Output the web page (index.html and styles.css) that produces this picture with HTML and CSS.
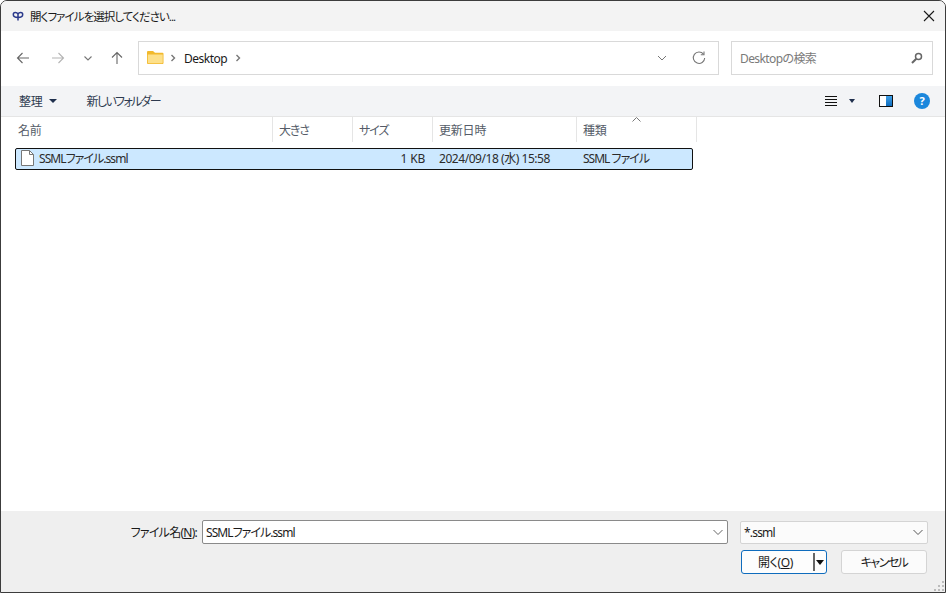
FILE: index.html
```html
<!DOCTYPE html>
<html lang="ja">
  <head>
    <meta charset="UTF-8" />
    <title>開くファイルを選択してください...</title>
    <link rel="stylesheet" href="styles.css">
  </head>
  <body>
    <div class="dialog">
      <div class="titleBar">
        <svg class="appIcon" width="12" height="12" viewBox="0 0 12 12">
          <path d="M6 4.200C5 2 1.300 2 1.300 4.500C1.300 7 4 7.500 6 7.500C8 7.500 10.700 7 10.700 4.500C10.700 2 7 2 6 4.200V10.500" stroke="#2b3a8c" stroke-width="1.500" fill="none"/>
        </svg>
        <span class="titleText">開くファイルを選択してください...</span>
        <svg class="closeIcon" width="12" height="12" viewBox="0 0 12 12">
          <path d="M1 1L11 11M11 1L1 11" stroke="#1a1a1a" stroke-width="1.1" fill="none"/>
        </svg>
      </div>

      <div class="navBar">
        <div class="navButtons">
          <svg width="14" height="14" viewBox="0 0 14 14"><path d="M13 7H1.5M6.5 2L1.5 7L6.5 12" stroke="#666" stroke-width="1.1" fill="none"/></svg>
          <svg class="navForward" width="14" height="14" viewBox="0 0 14 14"><path d="M1 7H12.5M7.5 2L12.5 7L7.5 12" stroke="#b4b4b4" stroke-width="1.1" fill="none"/></svg>
          <svg class="navDown" width="10" height="10" viewBox="0 0 10 10"><path d="M1.5 3.5L5 7L8.500 3.500" stroke="#777" stroke-width="1.1" fill="none"/></svg>
          <svg class="navUp" width="14" height="14" viewBox="0 0 14 14"><path d="M7 13V1.500M2 6.500L7 1.500L12 6.500" stroke="#666" stroke-width="1.1" fill="none"/></svg>
        </div>
        <div class="addressBox">
          <svg class="folderIcon" width="17" height="14" viewBox="0 0 17 14">
            <path d="M0 2Q0 1 1 1H6L8 2.800H15.500Q16.500 2.800 16.500 3.800V13Q16.500 14 15.500 14H1Q0 14 0 13Z" fill="#f2b92c"/>
            <path d="M0.800 4.500H15.700V12.500Q15.700 13.200 15 13.200H1.500Q0.800 13.200 0.800 12.500Z" fill="#fde08a"/>
          </svg>
          <svg class="crumbArrow" width="6" height="8" viewBox="0 0 6 8"><path d="M1.500 1L4.500 4L1.500 7" stroke="#777" stroke-width="1.400" fill="none"/></svg>
          <span class="crumbText">Desktop</span>
          <svg class="crumbArrow" width="6" height="8" viewBox="0 0 6 8"><path d="M1.500 1L4.500 4L1.500 7" stroke="#777" stroke-width="1.400" fill="none"/></svg>
          <svg class="addressDown" width="10" height="10" viewBox="0 0 10 10"><path d="M1 3L5 7L9 3" stroke="#777" stroke-width="1" fill="none"/></svg>
          <svg class="refreshIcon" width="14" height="14" viewBox="0 0 14 14">
            <path d="M11.500 3.200A5.700 5.700 0 1 0 12.700 7" stroke="#777" stroke-width="1.100" fill="none"/>
            <path d="M12 0.500V3.700H8.800" stroke="#777" stroke-width="1.100" fill="none"/>
          </svg>
        </div>
        <div class="searchBox">
          <span class="searchText">Desktopの検索</span>
          <svg width="12" height="12" viewBox="0 0 12 12">
            <circle cx="7.500" cy="4.500" r="3" stroke="#666" stroke-width="1.500" fill="none"/>
            <path d="M5.300 6.700L1 11" stroke="#666" stroke-width="2" fill="none"/>
          </svg>
        </div>
      </div>

      <div class="toolBar">
        <span class="toolItem organize">整理</span>
        <span class="caret"></span>
        <span class="toolItem newFolder">新しいフォルダー</span>
        <div class="toolRight">
          <svg class="viewIcon" width="12" height="10" viewBox="0 0 12 10">
            <path d="M0 0.500H12M0 3.500H12M0 6.500H12M0 9.500H12" stroke="#111" stroke-width="1" fill="none"/>
          </svg>
          <span class="caret"></span>
          <span class="paneIcon"><span class="paneFill"></span></span>
          <span class="helpIcon">?</span>
        </div>
      </div>

      <div class="listHeader">
        <span class="col colName">名前</span>
        <span class="col colSize kanaHead">大きさ</span>
        <span class="col colCap kanaHead">サイズ</span>
        <span class="col colDate">更新日時</span>
        <span class="col colType">種類<svg class="sortArrow" width="9" height="5" viewBox="0 0 9 5"><path d="M0.500 4.500L4.500 0.500L8.500 4.500" stroke="#777" stroke-width="1" fill="none"/></svg></span>
      </div>

      <div class="fileList">
        <div class="fileRow">
          <div class="cellName">
            <svg width="13" height="16" viewBox="0 0 13 16">
              <path d="M0.500 0.500H8.500L12.500 4.500V15.500H0.500Z" fill="#fff" stroke="#777" stroke-width="1"/>
              <path d="M8.500 0.500V4.500H12.500" fill="none" stroke="#777" stroke-width="1"/>
            </svg>
            <span class="fileName">SSMLファイル.ssml</span>
          </div>
          <div class="cellSize">1 KB</div>
          <div class="cellDate">2024/09/18 (水) 15:58</div>
          <div class="cellType">SSML ファイル</div>
        </div>
      </div>

      <div class="footer">
        <div class="footerRow">
          <label class="nameLabel" for="fileName">ファイル名(<u>N</u>):</label>
          <div class="nameBox">
            <input id="fileName" class="nameInput" type="text" value="SSMLファイル.ssml" />
            <svg width="10" height="10" viewBox="0 0 10 10"><path d="M0.500 3L5 7.500L9.500 3" stroke="#666" stroke-width="1" fill="none"/></svg>
          </div>
          <div class="filterBox">
            <span class="filterText">*.ssml</span>
            <svg width="10" height="10" viewBox="0 0 10 10"><path d="M0.500 3L5 7.500L9.500 3" stroke="#555" stroke-width="1" fill="none"/></svg>
          </div>
        </div>
        <div class="buttonRow">
          <div class="openButton">
            <span class="openLabel">開く(<u>O</u>)</span>
            <span class="openSplit"></span>
            <span class="caret blackCaret"></span>
          </div>
          <div class="cancelButton">キャンセル</div>
        </div>
        <svg class="grip" width="10" height="10" viewBox="0 0 10 10">
          <path d="M8 0h2v2H8zM4 4h2v2H4zM8 4h2v2H8zM0 8h2v2H0zM4 8h2v2H4zM8 8h2v2H8z" fill="#bbb"/>
        </svg>
      </div>
    </div>
  </body>
</html>
```

FILE: styles.css
```css
* {
  box-sizing: border-box;
}
html,
body {
  margin: 0;
  height: 593px;
  overflow: hidden;
}
body {
  font-family: "Noto Sans", "Noto Sans CJK JP", sans-serif;
  font-size: 12px;
  font-feature-settings: "palt";
  letter-spacing: -0.2px;
  color: #1a1a1a;
  background: #fff;
}
.dialog {
  position: relative;
  display: flex;
  flex-direction: column;
  width: 946px;
  height: 593px;
  border: 1px solid #3c3c3c;
  border-radius: 7px 7px 0 0;
  overflow: hidden;
  background: #fff;
}
.titleBar {
  display: flex;
  align-items: center;
  height: 30px;
  flex: none;
  padding: 0 10px 0 11px;
  background: #f3f3f3;
}
.titleText {
  margin: 0 0 1px 6px;
  font-size: 11.500px;
  letter-spacing: -0.950px;
}
.closeIcon {
  margin-left: auto;
}
.navBar {
  display: flex;
  align-items: flex-start;
  height: 55px;
  flex: none;
  padding: 10px 12px 0 15px;
  background: #fff;
}
.navButtons {
  display: flex;
  align-items: center;
  flex: none;
  width: 122px;
  height: 34px;
}
.navForward {
  margin-left: 21px;
}
.navDown {
  margin-left: 18px;
}
.navUp {
  margin-left: 17px;
}
.addressBox {
  display: flex;
  align-items: center;
  flex: none;
  width: 581px;
  height: 34px;
  padding: 0 12px 0 8px;
  border: 1px solid #d9d9d9;
}
.folderIcon {
  margin-bottom: 3px;
}
.crumbArrow {
  margin-left: 6px;
}
.crumbText {
  margin: 0 2px 0 8px;
  letter-spacing: -0.500px;
}
.addressDown {
  margin-left: auto;
}
.refreshIcon {
  margin-left: 25px;
}
.searchBox {
  display: flex;
  align-items: center;
  justify-content: space-between;
  flex: none;
  width: 202px;
  height: 34px;
  margin-left: 12px;
  padding: 0 9px 0 8px;
  border: 1px solid #d9d9d9;
  color: #7a7a7a;
}
.searchText {
  letter-spacing: -0.600px;
}
.toolBar {
  display: flex;
  align-items: center;
  height: 31px;
  flex: none;
  padding: 0 15px 1px 18px;
  background: #f3f4f6;
  border-bottom: 1px solid #e5e5e5;
  color: #2d3a4f;
}
.newFolder {
  margin-left: 30px;
  letter-spacing: -1.700px;
}
.caret {
  display: inline-block;
  width: 0;
  height: 0;
  margin-left: 6px;
  border-left: 4px solid transparent;
  border-right: 4px solid transparent;
  border-top: 4px solid #1f2f4d;
}
.toolRight {
  display: flex;
  align-items: center;
  margin-left: auto;
}
.toolRight .caret {
  margin-left: 12px;
  border-left-width: 3.500px;
  border-right-width: 3.500px;
}
.paneIcon {
  display: flex;
  justify-content: flex-end;
  width: 14px;
  height: 12px;
  margin-left: 24px;
  border: 1px solid #111;
  background: #fff;
}
.paneFill {
  width: 6px;
  background: linear-gradient(#3fa0e8, #0f6cbd);
}
.helpIcon {
  display: flex;
  align-items: center;
  justify-content: center;
  width: 16px;
  height: 16px;
  margin-left: 21px;
  border-radius: 50%;
  background: #1b87dc;
  color: #fff;
  font-size: 11px;
  font-weight: 700;
}
.listHeader {
  display: flex;
  height: 26px;
  flex: none;
  color: #555c68;
}
.col {
  position: relative;
  display: flex;
  align-items: center;
  height: 25px;
  padding-left: 6px;
  border-right: 1px solid #e5e5e5;
}
.kanaHead {
  letter-spacing: -1.100px;
}
.colName {
  width: 272px;
  padding-left: 17px;
}
.colSize,
.colCap {
  width: 80px;
}
.colDate {
  width: 144px;
}
.colType {
  width: 120px;
}
.sortArrow {
  position: absolute;
  left: 55px;
  top: 0;
}
.fileList {
  flex: 1;
  padding: 5px 0 0 14px;
}
.fileRow {
  display: flex;
  align-items: center;
  width: 678px;
  height: 22px;
  padding-bottom: 2px;
  border: 1px solid #111;
  border-radius: 2px;
  background: #cce8ff;
  color: #2b2b2b;
}
.cellName {
  display: flex;
  align-items: center;
  gap: 5px;
  width: 333px;
  padding-left: 5px;
}
.fileName {
  letter-spacing: -0.950px;
}
.cellSize {
  width: 76px;
  text-align: right;
}
.cellDate {
  width: 144px;
  margin-left: 14px;
  letter-spacing: -0.450px;
}
.cellType {
  letter-spacing: -1px;
}
.footer {
  position: relative;
  height: 81px;
  flex: none;
  padding: 9px 17px 0 0;
  background: #efefef;
}
.footerRow {
  display: flex;
  align-items: center;
}
.nameLabel {
  width: 201px;
  padding-right: 5px;
  text-align: right;
  letter-spacing: -0.750px;
}
.nameBox {
  display: flex;
  align-items: center;
  flex: none;
  width: 526px;
  height: 24px;
  padding-right: 4px;
  border: 1px solid #8a8a8a;
  border-radius: 2px;
  background: #fff;
}
.nameInput {
  flex: 1;
  min-width: 0;
  padding: 0 3px;
  border: none;
  outline: none;
  background: transparent;
  color: #1a1a1a;
  font: inherit;
  font-feature-settings: inherit;
  letter-spacing: -0.950px;
}
.filterBox {
  display: flex;
  align-items: center;
  justify-content: space-between;
  flex: none;
  width: 188px;
  height: 23px;
  margin-left: 12px;
  padding: 0 4px 0 3px;
  border: 1px solid #d4d4d4;
  border-radius: 2px;
  background: #fbfbfb;
}
.filterText {
  letter-spacing: -0.800px;
}
.buttonRow {
  display: flex;
  justify-content: flex-end;
  gap: 14px;
  margin-top: 6px;
  padding-right: 1px;
}
.openButton {
  display: flex;
  align-items: center;
  width: 86px;
  height: 24px;
  border: 1px solid #0f6cbd;
  border-radius: 3px;
  background: #fdfdfd;
}
.openLabel {
  width: 71px;
  padding-right: 4px;
  text-align: center;
  letter-spacing: -0.400px;
}
.openSplit {
  width: 2px;
  height: 18px;
  background: #666;
}
.blackCaret {
  margin-left: 1px;
  border-top: 5px solid #111;
}
.cancelButton {
  display: flex;
  align-items: center;
  justify-content: center;
  width: 86px;
  height: 24px;
  border: 1px solid #d4d4d4;
  border-radius: 3px;
  background: #fbfbfb;
  letter-spacing: -1.500px;
}
.grip {
  position: absolute;
  right: 1px;
  bottom: 1px;
}
```
